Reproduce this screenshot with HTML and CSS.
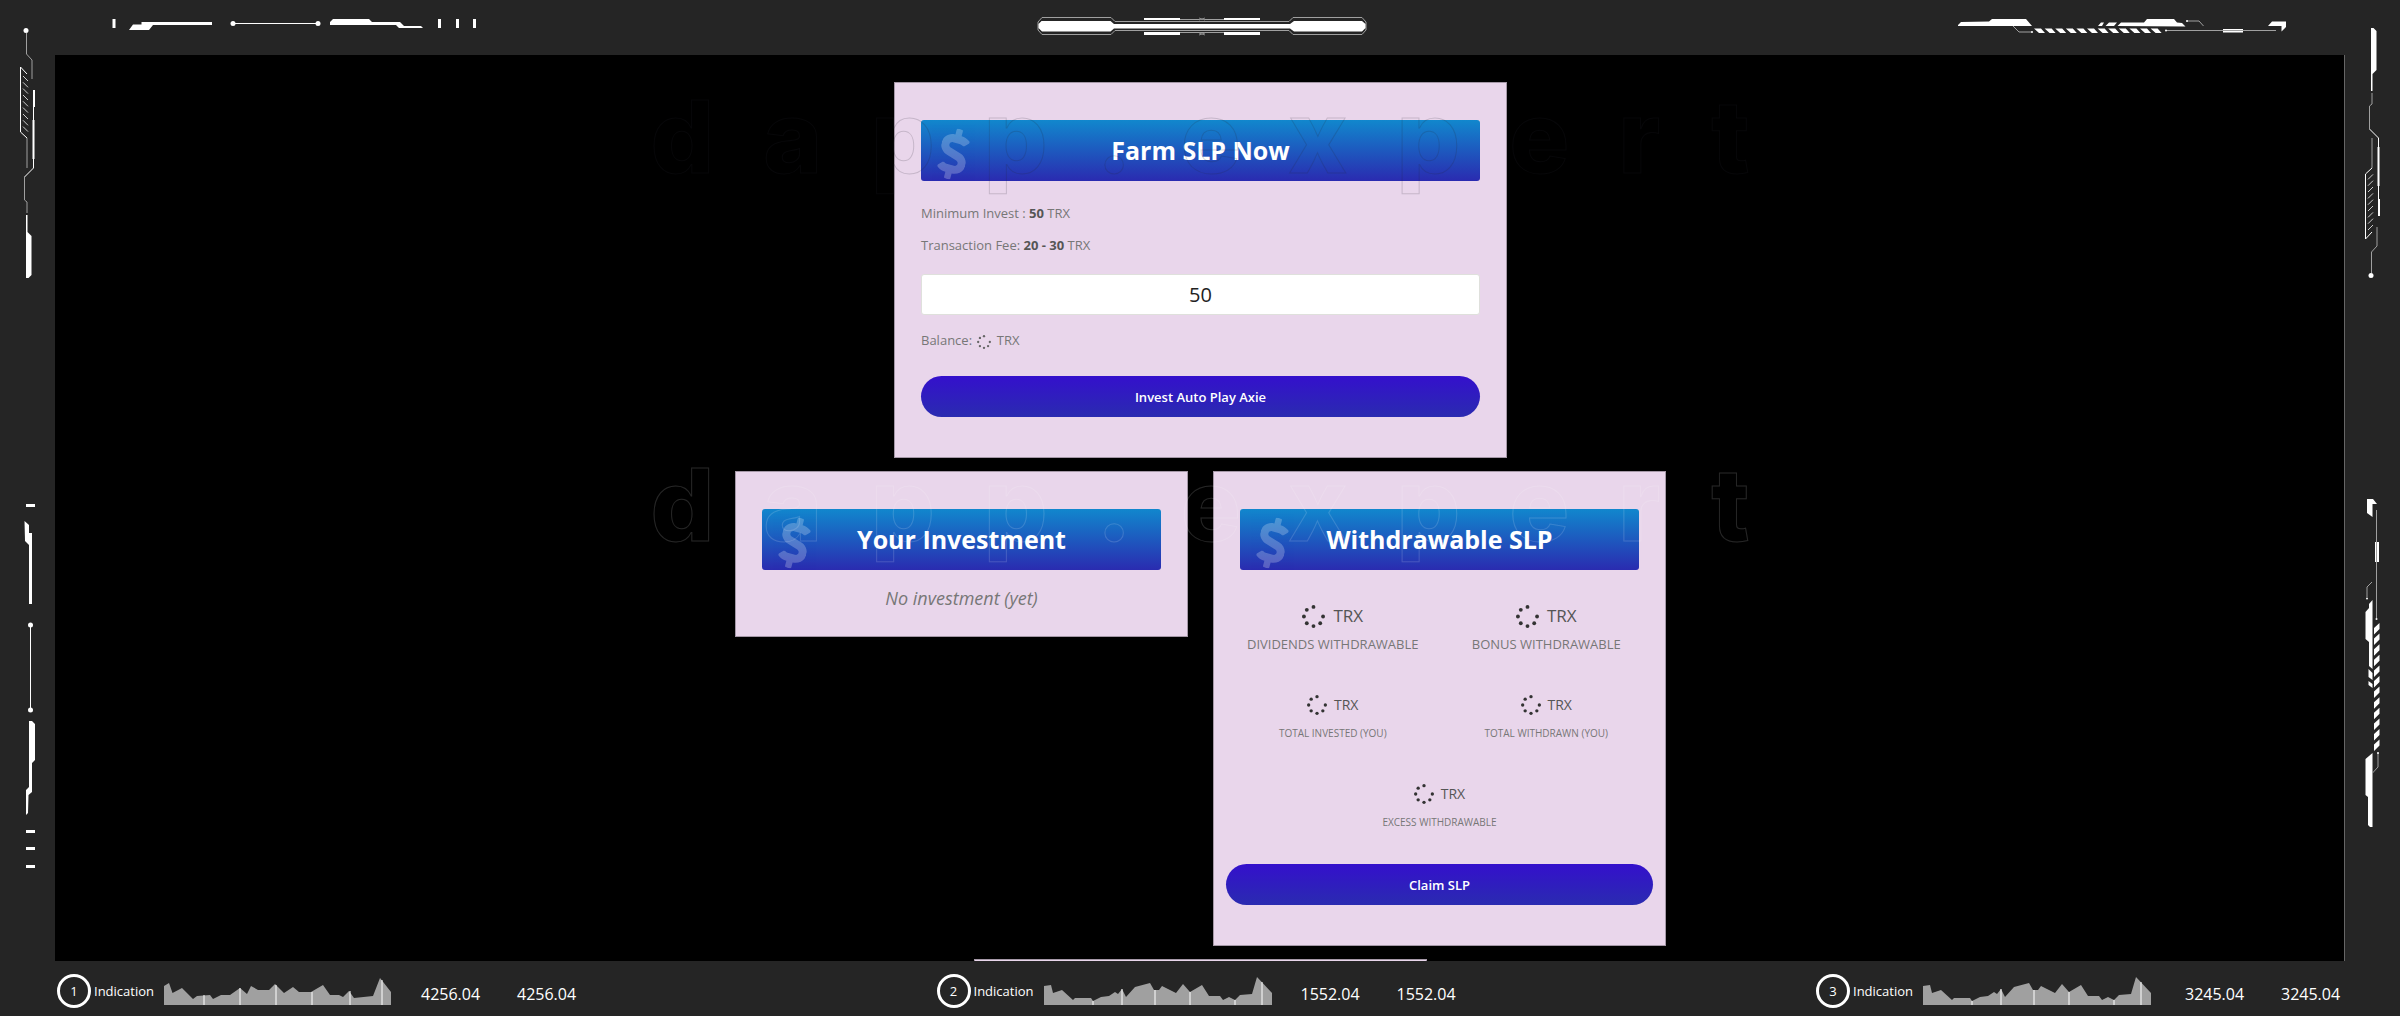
FILE: index.html
```html
<!DOCTYPE html>
<html lang="en">
	<head>
		<meta charset="utf-8">
		<title>Farm SLP</title>
		<link rel="stylesheet" href="styles.css">
	</head>
	<body>
		<!-- shared shapes -->
		<svg class="defs" width="0" height="0">
			<symbol id="spinner" viewBox="0 0 24 24">
				<circle cx="12" cy="2" r="2"/>
				<circle cx="5" cy="5" r="2"/>
				<circle cx="2" cy="12" r="2"/>
				<circle cx="5" cy="19" r="2"/>
				<circle cx="12" cy="22" r="2"/>
				<circle cx="19" cy="19" r="2"/>
				<circle cx="22" cy="12" r="2"/>
			</symbol>
			<symbol id="dollar" viewBox="0 0 288 512">
				<path d="M209.2 233.4l-108-31.6C88.7 198.2 80 186.5 80 173.5c0-16.3 13.2-29.5 29.5-29.5h66.3c12.2 0 24.2 3.7 34.2 10.5 6.1 4.1 14.3 3.1 19.5-2l34.8-34c7.1-6.9 6.1-18.4-1.8-24.5C238 74.8 207.4 64.1 176 64V16c0-8.8-7.2-16-16-16h-32c-8.8 0-16 7.2-16 16v48h-2.5C45.8 64-5.4 118.7.5 183.6c4.2 46.1 39.4 83.6 83.8 96.6l102.5 30c12.5 3.7 21.2 15.3 21.2 28.3 0 16.3-13.2 29.5-29.5 29.5h-66.3C100 368 88 364.3 78 357.5c-6.1-4.1-14.3-3.1-19.5 2l-34.8 34c-7.1 6.9-6.1 18.4 1.8 24.5 24.5 19.2 55.1 29.9 86.5 30v48c0 8.8 7.2 16 16 16h32c8.8 0 16-7.2 16-16v-48.2c46.6-.9 90.3-28.6 105.7-72.7 21.5-61.6-14.6-124.8-72.5-141.7z"/>
			</symbol>
			<symbol id="rail" viewBox="0 28 55 250">
				<circle cx="26" cy="30.5" r="2.5"/>
				<path class="thin" d="M26.5 33V54L32 60V79M27 138V168M24.5 177V200L27 202V213"/>
				<path class="line" d="M27 138L20.5 132V67L27 74M33.5 90V168L24.5 177"/>
				<path class="hatch" d="M23 76l5 5M23 82.3l5 5M23 88.6l5 5M23 95l5 5M23 101.3l5 5M23 107.6l5 5M23 114l5 5M23 120.3l5 5M23 126.6l5 5"/>
				<path d="M33 90h2v17h-2zM32.5 120h2v39h-2zM26 215h1.5v17l4 4v39l-3 3H26z"/>
			</symbol>
			<symbol id="wave" viewBox="0 0 228 28">
				<path class="area" d="M0 28V9L7 8L9 16L18 13L29 23L31 21H47L49 24L57 20L65 19L71 15L74 17L78 12L82 20L91 10L106 6L110 13H115L118 9L132 16L139 7L146 15L158 8L165 19H176L179 23L185 20L191 23L196 18L208 17L213 0L228 16V28z"/>
				<path class="bars" d="M49 24V28M78 12V28M111 13V28M146 15V28M191 23V28M218 5V28"/>
			</symbol>
		</svg>

		<header class="top">
			<svg width="366" height="16" viewBox="112 16 366 16">
				<path d="M112.5 19h3v9h-3zM129 30l4-5.5h8.5V22H212v3h-59l-4 5zM330 25v-3l3-3h36l3 3h28l4 4h17l2 2h-24l-3-3zM438 19h3v9h-3zM456 19h3v9h-3zM473 19h3v9h-3z"/>
				<path class="line" d="M233 23.5H318"/>
				<circle cx="233" cy="23.5" r="2.5"/>
				<circle cx="318" cy="23.5" r="2.5"/>
			</svg>
			<svg width="330" height="20" viewBox="1035 16 330 20" overflow="visible">
				<path class="thin" d="M1038 22L1042 17.5H1111L1115 21.5H1289L1293 17.5H1362L1366 22V30L1362 34.5H1293L1289 30.5H1115L1111 34.5H1042L1038 30zM1180 19.5H1224M1180 32.5H1224"/>
				<path d="M1038.5 24l3-3h69l3.500 3H1290l4-3h68l3.500 3v4l-3.500 3.500H1294l-4-3H1114l-3.500 3H1042l-3.500-3.500zM1144 18h36v2h-36zM1224 18h36v2h-36zM1144 32h36v3h-36zM1224 32h36v3h-36z"/>
				<path class="cross" d="M1199 18l6 2M1205 18l-6 2M1199 35l6-2M1205 35l-6-2"/>
			</svg>
			<svg width="330" height="18" viewBox="1957 16 330 18">
				<path d="M1958 26v-1l3-3 28-.5 3-2.500h34l6 7zM2098 26l3-3.500h3l-2 3.500zM2105.500 26l3.500-3.500h8l-3 3.500zM2117.500 26l3.500-3.500h23l3-3.500h27l3 3.500 5 .5 3.500 3.500zM2223 29h20v3.500h-20zM2268 26l4-4.500h14V27l-4.500 4.500V26z"/>
				<path d="M2034 28.500h7l4 4.500h-6zM2044.600 28.500h7l4 4.500h-6zM2055.200 28.500h7l4 4.500h-6zM2065.800 28.500h7l4 4.500h-6zM2076.400 28.500h7l4 4.500h-6zM2087 28.500h7l4 4.500h-6zM2097.600 28.500h7l4 4.500h-6zM2108.200 28.500h7l4 4.500h-6zM2118.800 28.500h7l4 4.500h-6zM2129.400 28.500h7l4 4.500h-6zM2140 28.500h7l4 4.500h-6zM2150.600 28.500h7l4 4.500h-6z"/>
				<path class="thin" d="M2013 26L2019 32H2032M2187 21H2199L2203.500 26M2166 30.500H2276"/>
				<circle cx="2032" cy="32" r="1"/>
				<circle cx="2187" cy="21" r="1"/>
				<circle cx="2166" cy="30.500" r="1"/>
			</svg>
		</header>

		<aside class="rail left">
			<svg width="55" height="250"><use href="#rail"/></svg>
			<svg width="55" height="366" viewBox="0 503 55 366">
				<path d="M26 504h9v3h-9zM24.500 521l4.500 4v8h3v71h-3v-59l-4-4zM29 721h3l3 3v36l-3 3v29l-3.500 3-.5 18-2 2v-25l3-3zM26 830h9v3h-9zM26 847h9v3h-9zM26 865h9v3h-9z"/>
				<path class="line" d="M30.500 625V710"/>
				<circle cx="30.500" cy="625" r="2.500"/>
				<circle cx="30.500" cy="710" r="2.500"/>
			</svg>
		</aside>

		<main>
			<div class="cards">
				<section class="card wide">
					<h2><svg class="dollar"><use href="#dollar"/></svg>Farm SLP Now</h2>
					<form>
						<p>Minimum Invest : <b>50</b> TRX</p>
						<p>Transaction Fee: <b>20 - 30</b> TRX</p>
						<input type="text" value="50" aria-label="Amount to invest">
						<p>Balance: <svg class="spin small"><use href="#spinner"/></svg> TRX</p>
						<button type="button">Invest Auto Play Axie</button>
					</form>
				</section>

				<section class="card short">
					<h2><svg class="dollar"><use href="#dollar"/></svg>Your Investment</h2>
					<p class="empty">No investment (yet)</p>
				</section>

				<section class="card">
					<h2><svg class="dollar"><use href="#dollar"/></svg>Withdrawable SLP</h2>
					<div class="stats">
						<div class="stat big">
							<div class="value"><svg class="spin"><use href="#spinner"/></svg>TRX</div>
							<div class="name">DIVIDENDS WITHDRAWABLE</div>
						</div>
						<div class="stat big">
							<div class="value"><svg class="spin"><use href="#spinner"/></svg>TRX</div>
							<div class="name">BONUS WITHDRAWABLE</div>
						</div>
						<div class="stat">
							<div class="value"><svg class="spin"><use href="#spinner"/></svg>TRX</div>
							<div class="name">TOTAL INVESTED (YOU)</div>
						</div>
						<div class="stat">
							<div class="value"><svg class="spin"><use href="#spinner"/></svg>TRX</div>
							<div class="name">TOTAL WITHDRAWN (YOU)</div>
						</div>
						<div class="stat full">
							<div class="value"><svg class="spin"><use href="#spinner"/></svg>TRX</div>
							<div class="name">EXCESS WITHDRAWABLE</div>
						</div>
					</div>
					<button type="button">Claim SLP</button>
				</section>

				<section class="card next"></section>
			</div>

			<div class="watermarks">
				<span class="dark">dapp.expert</span>
				<span class="light">dapp.expert</span>
			</div>
		</main>

		<aside class="rail right">
			<svg width="55" height="250"><g transform="translate(0 250) scale(1 -1)"><use href="#rail" width="55" height="250"/></g></svg>
			<svg width="55" height="330" viewBox="2345 498 55 330">
				<path d="M2367 499h6l4 5h-4.500v13l-5.500-4zM2375 542h4v20h-4zM2372.500 600l-3.500 4v4l-3.500 4v27l3.500 3v24l3.500 3zM2368.500 669l4 4v7l-4-3zM2368.500 681l4 3v4l-4-3zM2372.500 753l-7 6v36l2.500 2v28l2 2h2.500z"/>
				<path d="M2374 628l5.500-5v6l-5.500 5.500zM2374 638.600l5.500-5v6l-5.500 5.500zM2374 649.200l5.500-5v6l-5.500 5.500zM2374 659.800l5.500-5v6l-5.500 5.500zM2374 670.400l5.500-5v6l-5.500 5.500zM2374 681l5.500-5v6l-5.500 5.500zM2374 691.600l5.500-5v6l-5.500 5.500zM2374 702.200l5.500-5v6l-5.500 5.500zM2374 712.800l5.500-5v6l-5.500 5.500zM2374 723.400l5.500-5v6l-5.500 5.500zM2374 734l5.500-5v6l-5.500 5.500zM2374 744.600l5.500-5v6l-5.500 5.500z"/>
				<path class="thin" d="M2376.500 510V618M2372 582L2367 587V597M2378 753V767L2372.500 773"/>
				<circle cx="2376.500" cy="619" r="1"/>
				<circle cx="2367" cy="598.500" r="1"/>
				<circle cx="2378" cy="753" r="1"/>
			</svg>
		</aside>

		<footer>
			<div class="indication">
				<span class="num">1</span>
				<span class="label">Indication</span>
				<svg class="chart" viewBox="0 0 228 28">
					<path class="area" d="M0 28V9L5 6L8.500 16L18 11L29 22L33 19L46 18L49 22L57 18H66L76 11L83 17L87 9L94 13H105L111 7L120 16L129 10L135 15H147L159 8L166 18H175L179 20L185 14L190 21L209 19L216 1L227 15V28z"/>
					<path class="bars" d="M40 18V28M76 11V28M112 8V28M148 15V28M186 14V28M218 3V28"/>
				</svg>
				<span class="figure">4256.04</span>
				<span class="figure">4256.04</span>
			</div>
			<div class="indication">
				<span class="num">2</span>
				<span class="label">Indication</span>
				<svg class="chart"><use href="#wave"/></svg>
				<span class="figure">1552.04</span>
				<span class="figure">1552.04</span>
			</div>
			<div class="indication">
				<span class="num">3</span>
				<span class="label">Indication</span>
				<svg class="chart"><use href="#wave"/></svg>
				<span class="figure">3245.04</span>
				<span class="figure">3245.04</span>
			</div>
		</footer>
	</body>
</html>
```
FILE: styles.css
```css
* {
	box-sizing: border-box;
}
body {
	margin: 0;
	height: 100vh;
	display: grid;
	grid-template-columns: 55px minmax(0, 1fr) 55px;
	grid-template-rows: 55px minmax(0, 1fr) 55px;
	background: #252525;
	color: #fff;
	font-family: "Open Sans", "Noto Sans", sans-serif;
	font-size: 13px;
}
svg {
	display: block;
	fill: #fff;
}
.defs {
	position: absolute;
}
.line, .thin, .hatch, .cross {
	fill: none;
	stroke: #fff;
}
.thin {
	stroke: #a0a0a0;
}
.hatch {
	stroke: #ccc;
}
.cross {
	stroke: #888;
}

/* frame */
.top {
	grid-area: 1 / 2;
	display: grid;
	grid-template-columns: 1fr auto 1fr;
	align-items: start;
	padding: 16px 58px 0 57px;
}
.top svg:last-child {
	justify-self: end;
}
.rail {
	display: flex;
	flex-direction: column;
	gap: 225px;
	padding-top: 28px;
}
.left {
	grid-area: 1 / 1 / 4 / 2;
}
.right {
	grid-area: 1 / 3 / 4 / 4;
	gap: 220px;
}

/* content */
main {
	grid-area: 2 / 2;
	position: relative;
	overflow: hidden;
	background: #000;
	border-right: 1px solid #666;
}
.cards {
	display: grid;
	grid-template-columns: 453px 453px;
	justify-content: center;
	align-items: start;
	gap: 13px 25px;
	padding: 27px 0 0 2px;
}
.card {
	padding: 37px 12px 40px;
	background: #e9d6eb;
	border: 1px solid #a598a7;
}
.wide {
	grid-column: 1 / 3;
	justify-self: center;
	width: 613px;
}
.short {
	padding-bottom: 22px;
}
.next {
	grid-column: 1 / 3;
	justify-self: center;
	width: 453px;
}
.card h2 {
	position: relative;
	overflow: hidden;
	margin: 0 14px;
	border-radius: 3px;
	background: linear-gradient(#1187cd, #2a2bb0);
	font-size: 25px;
	line-height: 61px;
	text-align: center;
}
.dollar {
	position: absolute;
	left: 18px;
	top: 8px;
	width: 29px;
	height: 52px;
	transform: rotate(15deg);
	opacity: 0.23;
}
.card form {
	padding: 16px 14px 0;
}
.card p {
	margin: 0;
	line-height: 32px;
	color: #777;
}
.card b {
	color: #555;
}
.card input {
	display: block;
	width: 100%;
	height: 41px;
	margin: 13px 0 9px;
	border: 1px solid #dfe0dc;
	border-radius: 3px;
	background: #fff;
	color: #222;
	font: 20px "Open Sans", sans-serif;
	text-align: center;
}
.card button {
	display: block;
	width: 100%;
	height: 41px;
	margin-top: 20px;
	border: 0;
	border-radius: 21px;
	background: linear-gradient(#3410cc, #2a2bb0);
	color: #fff;
	font: 600 13px "Open Sans", sans-serif;
}
.card .empty {
	margin: 12px 0 0;
	font-size: 18px;
	font-style: italic;
	text-align: center;
}
.spin {
	width: 20px;
	height: 20px;
	fill: #333;
}
.small {
	display: inline-block;
	width: 14px;
	height: 14px;
	margin: 0 2px;
	vertical-align: middle;
	fill: #666;
}
.stats {
	display: grid;
	grid-template-columns: 1fr 1fr;
	gap: 33px 0;
	margin: 30px 0;
	color: #777;
	text-align: center;
}
.full {
	grid-column: 1 / 3;
}
.value {
	display: flex;
	justify-content: center;
	align-items: center;
	gap: 7px;
	line-height: 32px;
	font-size: 14px;
	color: #555;
}
.name {
	line-height: 24px;
	font-size: 10px;
}
.big .value {
	gap: 8px;
	font-size: 17px;
}
.big .spin {
	width: 23px;
	height: 23px;
}
.big .name {
	font-size: 13px;
}

/* outlined site name laid over the cards */
.watermarks {
	position: absolute;
	top: 32px;
	left: 0;
	right: 0;
	display: flex;
	flex-direction: column;
	align-items: center;
	gap: 268px;
	padding-left: 50px;
	pointer-events: none;
	font: 800 100px/100px Inter, sans-serif;
	letter-spacing: 49px;
	color: transparent;
	white-space: nowrap;
}
.dark {
	-webkit-text-stroke: 1px rgba(40, 40, 50, 0.18);
}
.light {
	-webkit-text-stroke: 1px rgba(255, 255, 255, 0.15);
}

/* bottom bar */
footer {
	grid-area: 3 / 2;
	display: flex;
	justify-content: space-between;
	align-items: center;
	padding: 4px 2px 0;
}
.indication {
	display: flex;
	align-items: center;
}
.num {
	width: 34px;
	height: 34px;
	border: 3px solid #fff;
	border-radius: 50%;
	line-height: 28px;
	text-align: center;
}
.label {
	width: 73px;
	padding-left: 3px;
}
.chart {
	width: 228px;
	height: 28px;
}
.indication:last-child .chart {
	margin-right: 5px;
}
.area {
	fill: #a0a0a0;
}
.bars {
	stroke: #fff;
}
.figure {
	width: 62px;
	margin-left: 34px;
	padding-top: 6px;
	font-size: 16px;
}
.chart + .figure {
	margin-left: 29px;
}
```
